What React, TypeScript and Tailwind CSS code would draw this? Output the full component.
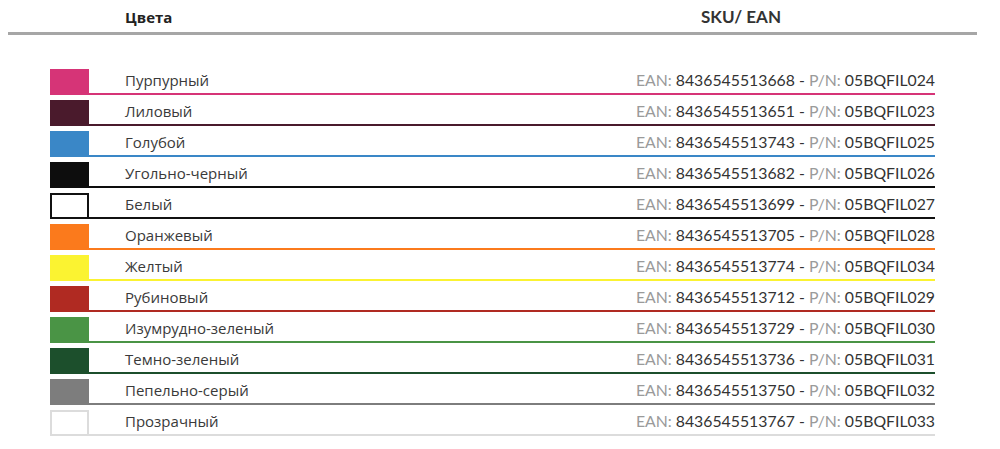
const rows = [
  { name: "Пурпурный", color: "bg-[#d63477]", line: "border-[#d63477]", ean: "8436545513668", pn: "05BQFIL024" },
  { name: "Лиловый", color: "bg-[#4a1a2c]", line: "border-[#4a1a2c]", ean: "8436545513651", pn: "05BQFIL023" },
  { name: "Голубой", color: "bg-[#3a87c7]", line: "border-[#3a87c7]", ean: "8436545513743", pn: "05BQFIL025" },
  { name: "Угольно-черный", color: "bg-[#0d0d0d]", line: "border-[#0d0d0d]", ean: "8436545513682", pn: "05BQFIL026" },
  { name: "Белый", color: "bg-white border-2 border-[#111]", line: "border-[#111]", ean: "8436545513699", pn: "05BQFIL027" },
  { name: "Оранжевый", color: "bg-[#fb7a1c]", line: "border-[#fb7a1c]", ean: "8436545513705", pn: "05BQFIL028" },
  { name: "Желтый", color: "bg-[#fbf331]", line: "border-[#fbf331]", ean: "8436545513774", pn: "05BQFIL034" },
  { name: "Рубиновый", color: "bg-[#b02a22]", line: "border-[#b02a22]", ean: "8436545513712", pn: "05BQFIL029" },
  { name: "Изумрудно-зеленый", color: "bg-[#4a9445]", line: "border-[#4a9445]", ean: "8436545513729", pn: "05BQFIL030" },
  { name: "Темно-зеленый", color: "bg-[#1c4f2c]", line: "border-[#1c4f2c]", ean: "8436545513736", pn: "05BQFIL031" },
  { name: "Пепельно-серый", color: "bg-[#7d7d7d]", line: "border-[#7d7d7d]", ean: "8436545513750", pn: "05BQFIL032" },
  { name: "Прозрачный", color: "bg-white border-2 border-[#dcdcdc]", line: "border-[#dcdcdc]", ean: "8436545513767", pn: "05BQFIL033" },
];

export default function App() {
  return (
    <div className="w-[1000px] h-[449px] bg-white pl-[8px] pt-[5px]">
      <div className="w-[969px] flex items-center h-[24px]">
        <div className="w-[497px] pl-[117px] text-[15px] font-bold text-[#222] font-['Open_Sans',sans-serif]">Цвета</div>
        <div className="flex-1 text-center text-[17px] font-bold text-[#333] font-['Lato',sans-serif]">SKU/ EAN</div>
      </div>
      <div className="w-[969px] h-[3px] bg-[#a6a6a6] mt-[3px]" />
      <div className="ml-[42px] w-[885px] mt-[34px] flex flex-col gap-[5px]">
        {rows.map((r) => (
          <div key={r.pn} className={`flex items-stretch h-[26px] border-b-2 ${r.line}`}>
            <div className={`w-[39px] shrink-0 -mb-[2px] ${r.color}`} />
            <div className="flex-1 flex items-center justify-between pl-[36px] pb-[2px]">
              <span className="text-[15px] text-[#3a3a3a] font-['Open_Sans',sans-serif]">{r.name}</span>
              <span className="text-[15.8px] text-[#333] font-['Lato',sans-serif]">
                <span className="text-[#9a9a9a]">EAN:</span> {r.ean} - <span className="text-[#9a9a9a]">P/N:</span> {r.pn}
              </span>
            </div>
          </div>
        ))}
      </div>
    </div>
  );
}
